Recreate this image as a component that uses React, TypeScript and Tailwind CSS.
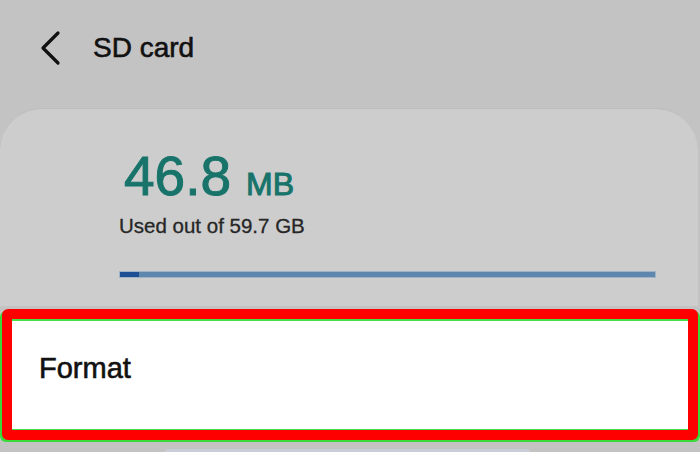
export default function App() {
  return (
    <div className="w-[700px] h-[452px] overflow-hidden bg-[#c3c3c3] flex flex-col font-['Liberation_Sans',Arial,sans-serif]">
      {/* header */}
      <div className="h-[108px] flex items-center shrink-0 pb-[12px]">
        <svg width="24" height="36" viewBox="0 0 24 36" className="ml-[38px]" fill="none">
          <polyline points="20,3 5,18 20,33" stroke="#111" strokeWidth="3.2" strokeLinecap="round" strokeLinejoin="round" />
        </svg>
        <span className="ml-[31px] text-[28px] leading-[28px] text-[#111] [-webkit-text-stroke:0.6px_#111]">SD card</span>
      </div>

      {/* storage card */}
      <div className="shrink-0 h-[198px] mr-[2px] rounded-t-[42px] bg-[#cdcdcd] border-t border-[#bcbcbc] pl-[119px] pr-[43px] pt-[40px]">
        <div className="ml-[5px] flex items-baseline text-[#18746a] leading-none [-webkit-text-stroke:1px_#18746a]">
          <span className="text-[55px]">46.8</span>
          <span className="ml-[15px] text-[32px]">MB</span>
        </div>
        <p className="mt-[12px] text-[20.5px] leading-[20px] text-[#262626] [-webkit-text-stroke:0.3px_#262626]">Used out of 59.7 GB</p>
        <div className="mt-[35px] h-[7px] w-[537px] flex bg-[#5f87ad] border border-[#9fb3c8]">
          <div className="w-[19px] bg-[#1d4f95]" />
        </div>
      </div>

      {/* highlighted Format row */}
      <div className="shrink-0 mt-[3px] mx-[2px] h-[131px] border-[10px] border-[#ff0000] rounded-[6px] bg-[#ff0000] shadow-[-2px_2px_0_0_#3ad93a,2px_2px_0_0_#3ad93a]">
        <div className="h-full bg-white border-t-2 border-b border-[#46e046] pl-[27px] pt-[33px]">
          <span className="text-[29px] leading-[28px] text-[#111] [-webkit-text-stroke:0.6px_#111]">Format</span>
        </div>
      </div>

      <div className="mt-[9px] ml-[165px] w-[365px] h-[10px] rounded-t-[6px] bg-[#c9ced6]" />
    </div>
  );
}
